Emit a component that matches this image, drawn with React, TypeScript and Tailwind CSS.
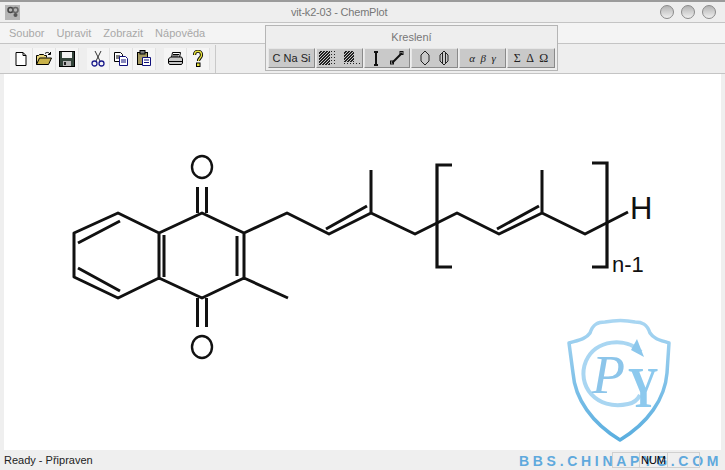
import React from "react";

const uiFont = "[font-family:'Liberation_Sans',Arial,sans-serif]";

function NewIcon() {
  return (
    <svg width="16" height="16" viewBox="0 0 16 16">
      <path d="M3 1.500h7l3 3v10H3z" fill="#fff" stroke="#000" />
      <path d="M10 1.500v3h3" fill="none" stroke="#000" />
    </svg>
  );
}

function OpenIcon() {
  return (
    <svg width="18" height="16" viewBox="0 0 18 16">
      <path d="M1.500 13.500v-9h2l1-1h4l1 1h2v2" fill="#e8d67c" stroke="#000" />
      <path d="M1.500 13.500l3-6.500h12l-3 6.500z" fill="#c9b24a" stroke="#000" />
      <path d="M10 2.500c1.500-1.500 3.500-1.500 5 .5M15.500 1v2.500h-2.500" fill="none" stroke="#000" />
    </svg>
  );
}

function SaveIcon() {
  return (
    <svg width="16" height="16" viewBox="0 0 16 16">
      <rect x="0.500" y="0.500" width="15" height="15" fill="#33443a" stroke="#000" />
      <rect x="3" y="1" width="10" height="6" fill="#f2f2f2" />
      <rect x="4" y="10" width="8" height="5" fill="#b8b8b8" />
      <rect x="5" y="11" width="2" height="3" fill="#222" />
    </svg>
  );
}

function CutIcon() {
  return (
    <svg width="14" height="17" viewBox="0 0 14 17">
      <path d="M4 1l5 10M10 1L5 11" fill="none" stroke="#333" />
      <circle cx="3.500" cy="13.500" r="2.500" fill="none" stroke="#1c1c8c" strokeWidth="1.300" />
      <circle cx="10.500" cy="13.500" r="2.500" fill="none" stroke="#1c1c8c" strokeWidth="1.300" />
    </svg>
  );
}

function CopyIcon() {
  return (
    <svg width="16" height="16" viewBox="0 0 16 16">
      <path d="M1.500 1.500h6l2 2v7h-8z" fill="#fff" stroke="#000" />
      <path d="M3 5h4M3 7h4" stroke="#000" />
      <path d="M6.500 5.500h6l2 2v7h-8z" fill="#fff" stroke="#10107c" />
      <path d="M8 9h5M8 11h5" stroke="#10107c" />
    </svg>
  );
}

function PasteIcon() {
  return (
    <svg width="16" height="17" viewBox="0 0 16 17">
      <rect x="1.500" y="2.500" width="10" height="12" fill="#a59a62" stroke="#000" />
      <rect x="4" y="0.500" width="5" height="3.500" fill="#777" stroke="#000" />
      <path d="M6.500 7.500h8v8h-8z" fill="#fff" stroke="#10107c" />
      <path d="M8 10h5M8 12.500h5" stroke="#10107c" />
    </svg>
  );
}

function PrintIcon() {
  return (
    <svg width="17" height="16" viewBox="0 0 17 16">
      <path d="M5.500 1.500h8l-1 5h-8z" fill="#fff" stroke="#000" />
      <path d="M6 3.500h6M5.500 5h6" stroke="#000" />
      <path d="M1.500 8l2-2h11l1 2v4l-1 1.500h-12l-1-1.500z" fill="#c8c8c8" stroke="#000" />
      <path d="M2 10.500h13" stroke="#000" />
    </svg>
  );
}

function HelpIcon() {
  return (
    <svg width="12" height="17" viewBox="0 0 12 17">
      <path d="M2.500 5c0-5 7-5 7 0 0 3-3 3-3 6" fill="none" stroke="#000" strokeWidth="3.200" />
      <path d="M2.500 5c0-5 7-5 7 0 0 3-3 3-3 6" fill="none" stroke="#e8e23c" strokeWidth="1.400" />
      <rect x="4.500" y="13" width="3.500" height="3.500" fill="#e8e23c" stroke="#000" />
    </svg>
  );
}

const toolGroups = [
  [<NewIcon key="new" />, <OpenIcon key="open" />, <SaveIcon key="save" />],
  [<CutIcon key="cut" />, <CopyIcon key="copy" />, <PasteIcon key="paste" />],
  [<PrintIcon key="print" />, <HelpIcon key="help" />],
];

function Hatch({ variant }: { variant: "a" | "b" }) {
  const cells: React.ReactNode[] = [];
  const solidW = variant === "a" ? 11 : 10;
  const solidH = variant === "a" ? 14 : 11;
  for (let y = 0; y < 14; y++) {
    for (let x = 0; x < 16; x++) {
      const solid = x < solidW && y < solidH;
      if (solid ? (x + y) % 3 === 0 : x % 3 !== 0 || y % 3 !== 0) continue;
      if (!solid && variant === "b" && y < 10) continue;
      cells.push(<rect key={`${x}-${y}`} x={x} y={y} width="1" height="1" fill="#222" />);
    }
  }
  return (
    <svg width="16" height="14" viewBox="0 0 16 14">
      {cells}
    </svg>
  );
}

function BondV() {
  return (
    <svg width="10" height="15" viewBox="0 0 10 15">
      <path d="M5 2v11" stroke="#111" strokeWidth="2" />
      <path d="M3 1h4M3 14h4" stroke="#111" strokeWidth="2" />
    </svg>
  );
}

function BondD() {
  return (
    <svg width="14" height="14" viewBox="0 0 14 14">
      <path d="M2 12L12 2" stroke="#111" strokeWidth="2" />
      <rect x="10" y="0.500" width="3" height="3" fill="none" stroke="#111" />
      <rect x="0.500" y="10" width="3" height="3" fill="none" stroke="#111" />
    </svg>
  );
}

function Ring({ double }: { double?: boolean }) {
  return (
    <svg width="10" height="16" viewBox="0 0 10 16">
      <path d="M5 1l4 4v6l-4 4-4-4V5z" fill="none" stroke="#222" />
      {double && <path d="M3.500 3v10M6.500 3v10" stroke="#222" />}
    </svg>
  );
}

function DrawButton({ children, w }: { children: React.ReactNode; w: string }) {
  return (
    <div
      className={`${w} h-[20px] flex items-center justify-center gap-[9px] bg-[#c9c9c9] border-r border-b border-r-[#8a8a8a] border-b-[#8a8a8a] border-t border-l border-t-[#e6e6e6] border-l-[#e6e6e6]`}
    >
      {children}
    </div>
  );
}

function DrawingPanel() {
  return (
    <div className="absolute left-[265px] top-[25px] w-[293px] h-[46px] bg-[#eeeeee] border border-[#b5b5b5] px-[2px] flex flex-col">
      <div className="h-[22px] flex items-center justify-center text-[11px] text-[#777]">Kreslení</div>
      <div className="flex gap-[1px]">
        <DrawButton w="w-[47px]">
          <span className="text-[11px] text-[#222] whitespace-nowrap">C Na Si</span>
        </DrawButton>
        <DrawButton w="w-[47px]">
          <Hatch variant="a" />
          <Hatch variant="b" />
        </DrawButton>
        <DrawButton w="w-[46px]">
          <BondV />
          <BondD />
        </DrawButton>
        <DrawButton w="w-[47px]">
          <Ring />
          <Ring double />
        </DrawButton>
        <DrawButton w="w-[47px]">
          <span className="text-[11px] italic text-[#222] [font-family:'Liberation_Serif',serif] whitespace-pre">
            α  β  γ
          </span>
        </DrawButton>
        <DrawButton w="w-[48px]">
          <span className="text-[12px] text-[#222] [font-family:'Liberation_Serif',serif] whitespace-pre">
            Σ  Δ  Ω
          </span>
        </DrawButton>
      </div>
    </div>
  );
}

function Molecule() {
  const bonds =
    "M74 233L118 213L159 233V278L118 298L74 277ZM159 233L202 213L244 233V278L202 298L159 278" +
    "M244 233L287 213L329 234L371 213L415 234L457 213L499 234L542 213L585 234L628 212" +
    "M244 278L288 298M371 213V170M542 213V170";
  const inner =
    "M78 243L120 221M78 268L120 291M164 235V277M237 236V276M326 229L367 206M497 229L539 206" +
    "M197.500 187V213M206.500 187V213M197.500 298V327M206.500 298V327";
  return (
    <svg viewBox="4 74 717 376" className="block w-full h-full">
      <path d={bonds} fill="none" stroke="#111" strokeWidth="3" strokeLinejoin="round" />
      <path d={inner} fill="none" stroke="#111" strokeWidth="3" />
      <path d="M452 165H437V267H452M592 163H607V267H592" fill="none" stroke="#111" strokeWidth="3.200" />
      <ellipse cx="202" cy="167" rx="10" ry="11" fill="none" stroke="#111" strokeWidth="2.400" />
      <ellipse cx="202" cy="347" rx="10" ry="11" fill="none" stroke="#111" strokeWidth="2.400" />
      <text x="630" y="219" fontSize="31" fill="#111" fontFamily="'Liberation Sans', Arial, sans-serif">
        H
      </text>
      <text x="612" y="272" fontSize="22" fill="#111" fontFamily="'Liberation Sans', Arial, sans-serif">
        n-1
      </text>
    </svg>
  );
}

function Watermark() {
  return (
    <div className="absolute left-[519px] top-[318px] w-[206px] h-[152px] pointer-events-none">
      <svg width="104" height="125" viewBox="-1 -1 104 125" className="absolute left-[48px] top-0">
        <defs>
          <linearGradient id="shield" x1="0" y1="0" x2="0" y2="1">
            <stop offset="0" stopColor="#a9d6f2" />
            <stop offset="1" stopColor="#5aaedf" />
          </linearGradient>
        </defs>
        <path
          d="M1 24C11 21 18 20 22 14C25 5 30 3 37 3C47 1 58 1 67 3C74 3 79 5 82 14C86 20 92 21 101 24L99 54C97 80 80 104 52 121C24 104 7 80 5 54Z"
          fill="#fff"
          stroke="url(#shield)"
          strokeWidth="3.500"
          strokeLinejoin="round"
        />
        <path
          d="M73 33C58 18 28 20 18 42C8 66 28 92 60 85C66 84 70 80 72 76"
          fill="none"
          stroke="#a9d6f2"
          strokeWidth="4"
        />
        <path d="M69 20l7 18-13-7z" fill="#8cc7ec" />
        <text
          x="24"
          y="74"
          fontSize="54"
          fontStyle="italic"
          fill="#8cc5ea"
          fontFamily="'Liberation Serif', serif"
        >
          P
        </text>
        <text
          transform="translate(60 88) scale(0.75 1)"
          fontSize="56"
          fontWeight="bold"
          fill="#8cc9ee"
          fontFamily="'Liberation Serif', serif"
        >
          Y
        </text>
      </svg>
      <span className="absolute left-0 top-[136px] text-[14px] font-bold tracking-[3.700px] leading-none text-[#5fa9dd] whitespace-nowrap">
        BBS.CHINAPYG.COM
      </span>
    </div>
  );
}

function WindowButton() {
  return (
    <div className="w-[14px] h-[14px] rounded-full border border-[#8a8a8a] bg-linear-to-b from-[#b4b4b4] to-[#efefef]" />
  );
}

export default function App() {
  return (
    <div className={`relative w-[725px] h-[470px] overflow-hidden flex flex-col bg-[#efefef] ${uiFont}`}>
      <div className="relative h-[23px] shrink-0 flex items-center border-t-2 border-t-[#9b9b9b] border-b border-b-[#c4c4c4] bg-[#eeeeee]">
        <div className="ml-[5px] w-[15px] h-[15px] bg-[#b5b5b5] flex items-center justify-center">
          <svg width="12" height="12" viewBox="0 0 12 12">
            <circle cx="3.500" cy="4" r="2.500" fill="none" stroke="#444" strokeWidth="1.500" />
            <circle cx="8.500" cy="4" r="2.500" fill="none" stroke="#666" strokeWidth="1.500" />
            <circle cx="8.500" cy="9" r="2" fill="#555" />
          </svg>
        </div>
        <span className="ml-[271px] text-[11px] tracking-[-0.2px] text-[#777] whitespace-nowrap">
          vit-k2-03 - ChemPlot
        </span>
        <div className="ml-auto mr-[9px] flex gap-[7px]">
          <WindowButton />
          <WindowButton />
          <WindowButton />
        </div>
      </div>

      <div className="h-[21px] shrink-0 flex items-center gap-[12px] pl-[9px] bg-[#f4f4f4] border-b border-b-[#c4c4c4] text-[11px] text-[#a8a8a8]">
        <span>Soubor</span>
        <span>Upravit</span>
        <span>Zobrazit</span>
        <span>Nápověda</span>
      </div>

      <div className="h-[30px] shrink-0 flex items-center pl-[10px] bg-[#eeeeee] border-b border-b-[#c4c4c4]">
        <div className="flex gap-[8px] pr-[5px] h-[28px] items-center border-r border-r-[#c9c9c9]">
          {toolGroups.map((group, i) => (
            <div key={i} className="flex">
              {group.map((icon, j) => (
                <div key={j} className="w-[23px] h-[22px] flex items-center justify-center bg-[#f5f5f5] border-r border-r-[#e2e2e2]">
                  {icon}
                </div>
              ))}
            </div>
          ))}
        </div>
      </div>

      <div className="flex-1 min-h-0 mx-[4px] bg-white">
        <Molecule />
      </div>

      <div className="h-[20px] shrink-0 flex items-center pl-[4px] bg-[#efefef] text-[11px] text-[#222]">
        <span>Ready - Připraven</span>
      </div>

      <DrawingPanel />
      <Watermark />

      <div className="absolute left-[612px] top-[452px] flex h-[16px]">
        <div className="w-[28px] border border-[#d0d0d0]" />
        <div className="w-[27px] border-y border-[#d0d0d0] flex items-center justify-center text-[11px] text-black">
          NUM
        </div>
        <div className="w-[33px] border border-[#d0d0d0]" />
      </div>
    </div>
  );
}
